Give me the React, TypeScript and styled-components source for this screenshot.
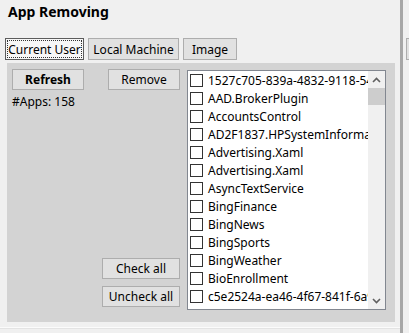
import React from "react";
import styled, { createGlobalStyle } from "styled-components";

const Global = createGlobalStyle`
  html, body { margin: 0; padding: 0; background: #f0f0f0; }
  body { font-family: "Noto Sans", "Open Sans", sans-serif; font-size: 12px; color: #000; }
`;

const Window = styled.div`
  width: 409px;
  height: 333px;
  display: grid;
  grid-template-columns: 400px 3px 6px;
  overflow: hidden;
  background: #f0f0f0;
`;

const Main = styled.div`
  display: flex;
  flex-direction: column;
`;

const Splitter = styled.div`
  background: #a7a7a7;
`;

const Edge = styled.div`
  padding-top: 38px;
`;

const EdgeButton = styled.div`
  margin-left: 3px;
  height: 20px;
  border: 1px solid #adadad;
  border-right: none;
  background: #e1e1e1;
`;

const Title = styled.h1`
  margin: 0;
  padding: 3px 0 0 8px;
  height: 38px;
  box-sizing: border-box;
  font-size: 14px;
  font-weight: 700;
  line-height: 18px;
`;

const Tabs = styled.div`
  display: flex;
  gap: 4px;
  padding-left: 5px;
  height: 25px;
  align-items: flex-start;
`;

const Tab = styled.button<{ $active?: boolean; $w: number }>`
  width: ${(p) => p.$w}px;
  height: 22px;
  padding: 0;
  font: inherit;
  font-size: 12px;
  color: #000;
  background: ${(p) => (p.$active ? "#f7f7f7" : "#e1e1e1")};
  border: 1px solid ${(p) => (p.$active ? "#5c5c5c" : "#adadad")};
  outline: ${(p) => (p.$active ? "1px dotted #333" : "none")};
  outline-offset: -3px;
`;

const Panel = styled.div`
  margin-left: 7px;
  width: 388px;
  height: 259px;
  background: #d3d3d3;
  display: grid;
  grid-template-columns: 168px 199px;
  gap: 7px;
  padding: 6px 0 0 5px;
  box-sizing: border-box;
`;

const Footer = styled.div`
  margin-top: 5px;
  height: 1px;
  background: #fbfbfb;
  border-bottom: 1px solid #e3e3e3;
`;

const LeftCol = styled.div`
  display: flex;
  flex-direction: column;
  height: 238px;
`;

const TopRow = styled.div`
  display: flex;
  justify-content: space-between;
`;

const Button = styled.button<{ $bold?: boolean; $w: number }>`
  width: ${(p) => p.$w}px;
  height: 21px;
  padding: 0;
  font: inherit;
  font-size: 12px;
  font-weight: ${(p) => (p.$bold ? 700 : 400)};
  color: #000;
  background: #e1e1e1;
  border: 1px solid #adadad;
`;

const Count = styled.div`
  margin-top: 4px;
  line-height: 16px;
`;

const BottomButtons = styled.div`
  margin-top: auto;
  display: flex;
  flex-direction: column;
  align-items: flex-end;
  gap: 7px;
`;

const List = styled.div`
  margin-top: 1px;
  width: 199px;
  height: 240px;
  box-sizing: border-box;
  border: 1px solid #828790;
  background: #fff;
  display: grid;
  grid-template-columns: 1fr 17px;
  overflow: hidden;
`;

const Items = styled.div`
  overflow: hidden;
`;

const Row = styled.div`
  height: 18px;
  display: flex;
  align-items: center;
  gap: 5px;
  padding-left: 2px;
  white-space: nowrap;
`;

const Box = styled.span`
  flex: none;
  width: 11px;
  height: 11px;
  border: 1px solid #333;
  background: #fff;
`;

const Scroll = styled.div`
  background: #f0f0f0;
  display: flex;
  flex-direction: column;
`;

const Arrow = styled.div`
  height: 17px;
  display: flex;
  align-items: center;
  justify-content: center;
`;

const Thumb = styled.div`
  height: 17px;
  background: #cdcdcd;
`;

const Track = styled.div`
  flex: 1;
`;

const items = [
  "1527c705-839a-4832-9118-54d4Bd6a0c89",
  "AAD.BrokerPlugin",
  "AccountsControl",
  "AD2F1837.HPSystemInformation",
  "Advertising.Xaml",
  "Advertising.Xaml",
  "AsyncTextService",
  "BingFinance",
  "BingNews",
  "BingSports",
  "BingWeather",
  "BioEnrollment",
  "c5e2524a-ea46-4f67-841f-6a9465d9d515",
];

const Chevron = ({ up }: { up?: boolean }) => (
  <svg width="9" height="6" viewBox="0 0 9 6">
    <path
      d={up ? "M1 5 L4.5 1.5 L8 5" : "M1 1 L4.5 4.5 L8 1"}
      fill="none"
      stroke="#606060"
      strokeWidth="1.6"
    />
  </svg>
);

export default function App() {
  return (
    <>
      <Global />
      <Window>
        <Main>
          <Title>App Removing</Title>
          <Tabs>
            <Tab $active $w={79}>Current User</Tab>
            <Tab $w={91}>Local Machine</Tab>
            <Tab $w={54}>Image</Tab>
          </Tabs>
          <Panel>
            <LeftCol>
              <TopRow>
                <Button $bold $w={72}>Refresh</Button>
                <Button $w={72}>Remove</Button>
              </TopRow>
              <Count>#Apps: 158</Count>
              <BottomButtons>
                <Button $w={78}>Check all</Button>
                <Button $w={78}>Uncheck all</Button>
              </BottomButtons>
            </LeftCol>
            <List>
              <Items>
                {items.map((t, i) => (
                  <Row key={i}>
                    <Box />
                    {t}
                  </Row>
                ))}
              </Items>
              <Scroll>
                <Arrow><Chevron up /></Arrow>
                <Thumb />
                <Track />
                <Arrow><Chevron /></Arrow>
              </Scroll>
            </List>
          </Panel>
          <Footer />
        </Main>
        <Splitter />
        <Edge>
          <EdgeButton />
        </Edge>
      </Window>
    </>
  );
}
